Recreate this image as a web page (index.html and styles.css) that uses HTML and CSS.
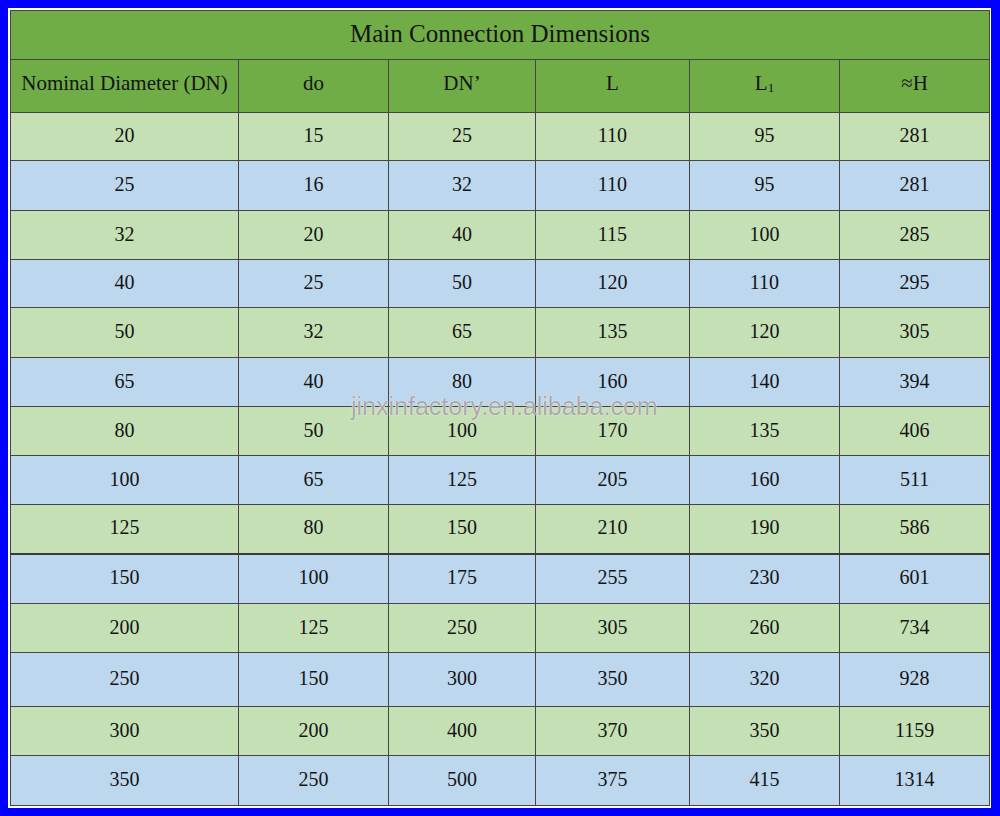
FILE: index.html
```html
<!DOCTYPE html>
<html>
<head>
<meta charset="utf-8">
<link rel="stylesheet" href="styles.css">
</head>
<body>
<div class="frame">
  <table class="dims">
    <colgroup>
      <col class="c1"><col class="c2"><col class="c3"><col class="c4"><col class="c5"><col class="c6">
    </colgroup>
    <thead>
      <tr class="title"><th colspan="6">Main Connection Dimensions</th></tr>
      <tr class="heads"><th>Nominal Diameter (DN)</th><th>do</th><th>DN’</th><th>L</th><th>L<span class="sub">1</span></th><th>≈H</th></tr>
    </thead>
    <tbody>
      <tr class="g h48"><td>20</td><td>15</td><td>25</td><td>110</td><td>95</td><td>281</td></tr>
      <tr class="b h50"><td>25</td><td>16</td><td>32</td><td>110</td><td>95</td><td>281</td></tr>
      <tr class="g"><td>32</td><td>20</td><td>40</td><td>115</td><td>100</td><td>285</td></tr>
      <tr class="b h48"><td>40</td><td>25</td><td>50</td><td>120</td><td>110</td><td>295</td></tr>
      <tr class="g h50"><td>50</td><td>32</td><td>65</td><td>135</td><td>120</td><td>305</td></tr>
      <tr class="b"><td>65</td><td>40</td><td>80</td><td>160</td><td>140</td><td>394</td></tr>
      <tr class="g"><td>80</td><td>50</td><td>100</td><td>170</td><td>135</td><td>406</td></tr>
      <tr class="b"><td>100</td><td>65</td><td>125</td><td>205</td><td>160</td><td>511</td></tr>
      <tr class="g"><td>125</td><td>80</td><td>150</td><td>210</td><td>190</td><td>586</td></tr>
      <tr class="b h50 split"><td>150</td><td>100</td><td>175</td><td>255</td><td>230</td><td>601</td></tr>
      <tr class="g"><td>200</td><td>125</td><td>250</td><td>305</td><td>260</td><td>734</td></tr>
      <tr class="b h54"><td>250</td><td>150</td><td>300</td><td>350</td><td>320</td><td>928</td></tr>
      <tr class="g"><td>300</td><td>200</td><td>400</td><td>370</td><td>350</td><td>1159</td></tr>
      <tr class="b h50"><td>350</td><td>250</td><td>500</td><td>375</td><td>415</td><td>1314</td></tr>
    </tbody>
  </table>
  <div class="watermark">jinxinfactory.en.alibaba.com</div>
</div>
</body>
</html>
```
FILE: styles.css
```css
html, body {
  margin: 0;
  padding: 0;
  background: #0000fc;
}
body {
  width: 1000px;
  height: 816px;
  overflow: hidden;
}
.frame {
  position: relative;
  margin: 8px 0 0 8px;
  width: 979px;
  padding: 2px 2px 2px 2px;
  background: #ffffff;
}
.dims {
  width: 979px;
  border-collapse: collapse;
  table-layout: fixed;
  font-family: "Liberation Serif", "Times New Roman", serif;
  font-size: 20px;
  color: #141414;
  border: 1px solid #4a4a4a;
}
.c1 { width: 228px; }
.c2 { width: 150px; }
.c3 { width: 147px; }
.c4 { width: 154px; }
.c5 { width: 150px; }
.c6 { width: 150px; }
.dims th, .dims td {
  border: 1px solid #454545;
  padding: 0 0 2px 0;
  text-align: center;
  vertical-align: middle;
  font-weight: normal;
}
.title th {
  height: 46px;
  background: #70ad47;
  font-size: 25px;
}
.heads th {
  height: 46px;
  padding-bottom: 6px;
  background: #70ad47;
  font-size: 21px;
}
.sub {
  font-size: 13px;
  vertical-align: -2px;
}
.dims tbody tr { height: 49px; }
.dims tbody tr.h48 { height: 48px; }
.dims tbody tr.h50 { height: 50px; }
.dims tbody tr.h54 { height: 54px; }
.g td { background: #c5e0b4; }
.b td { background: #bdd7ee; }
.split td { border-top: 2px solid #3a3a3a; }
.watermark {
  position: absolute;
  left: 343px;
  top: 384px;
  font-family: "Liberation Sans", Arial, sans-serif;
  font-size: 25px;
  color: rgba(150, 150, 150, 0.8);
  text-shadow: 0 0 1px #f4f4f4, 0 0 1px #f4f4f4;
}
```
